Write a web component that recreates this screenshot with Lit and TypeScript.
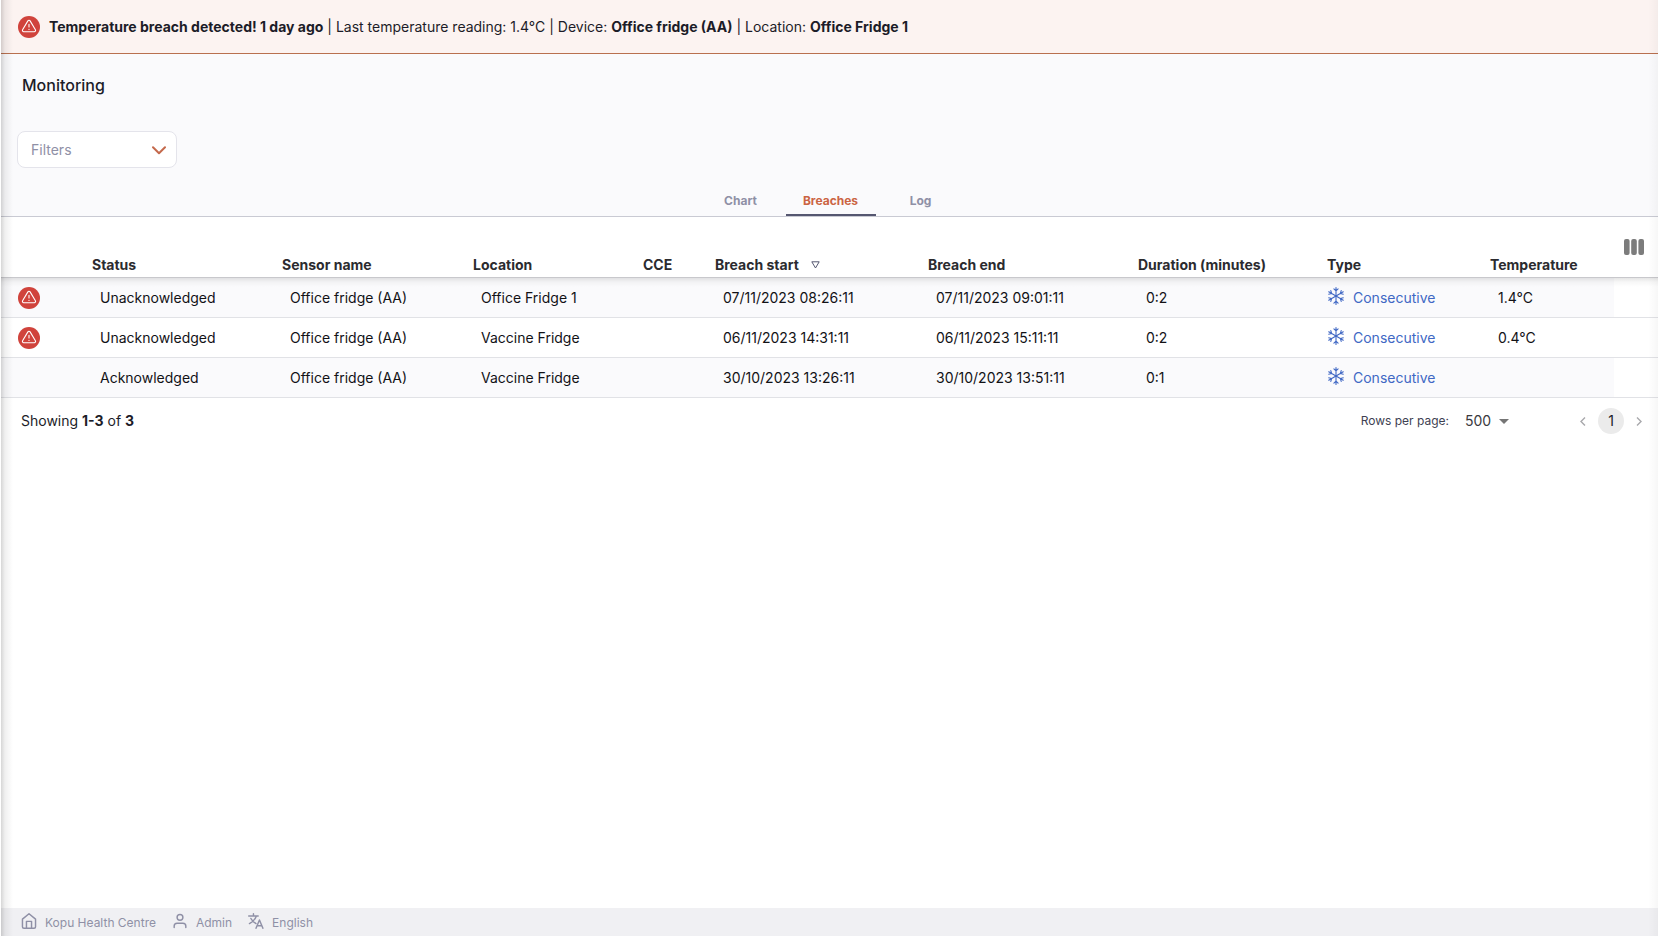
import { LitElement, html, css, svg, nothing } from "lit";
import { customElement, property, state } from "lit/decorators.js";

interface Breach {
  acknowledged: boolean;
  sensor: string;
  location: string;
  cce: string;
  start: string;
  end: string;
  duration: string;
  type: string;
  temperature: string;
}

const BREACHES: Breach[] = [
  { acknowledged: false, sensor: "Office fridge (AA)", location: "Office Fridge 1", cce: "", start: "07/11/2023 08:26:11", end: "07/11/2023 09:01:11", duration: "0:2", type: "Consecutive", temperature: "1.4°C" },
  { acknowledged: false, sensor: "Office fridge (AA)", location: "Vaccine Fridge", cce: "", start: "06/11/2023 14:31:11", end: "06/11/2023 15:11:11", duration: "0:2", type: "Consecutive", temperature: "0.4°C" },
  { acknowledged: true, sensor: "Office fridge (AA)", location: "Vaccine Fridge", cce: "", start: "30/10/2023 13:26:11", end: "30/10/2023 13:51:11", duration: "0:1", type: "Consecutive", temperature: "" },
];

@customElement("alert-icon")
export class AlertIcon extends LitElement {
  static styles = css`
    :host { display: block; width: 22px; height: 22px; flex: none; }
    .icon { display: block; width: 100%; height: 100%; }
  `;
  render() {
    return html`<svg class="icon" viewBox="0 0 22 22" aria-hidden="true">
      <circle cx="11" cy="11" r="11" fill="#d0433c" />
      <g fill="none" stroke="#fff" stroke-width="1.1" stroke-linecap="round" stroke-linejoin="round">
        <path d="M9.900 4.900 4.600 13.800a1.250 1.250 0 0 0 1.100 1.900h10.600a1.250 1.250 0 0 0 1.100-1.900L12.100 4.900a1.280 1.280 0 0 0-2.200 0z" />
        <path d="M11 8.300v2.700M11 13.300v.1" />
      </g>
    </svg>`;
  }
}

@customElement("breach-banner")
export class BreachBanner extends LitElement {
  static styles = css`
    .banner {
      display: flex; align-items: center; gap: 9px;
      height: 53px; padding: 0 17px;
      background: #fcf3f1; border-bottom: 1px solid #b9704f;
      color: #1c1c28; font-size: 14px; line-height: 20px;
    }
    .text { margin: 0; }
    .strong { font-weight: 700; }
  `;
  render() {
    return html`<div class="banner" role="alert">
      <alert-icon></alert-icon>
      <p class="text"><b class="strong">Temperature breach detected! 1 day ago</b> | Last temperature reading: 1.4°C | Device: <b class="strong">Office fridge (AA)</b> | Location: <b class="strong">Office Fridge 1</b></p>
    </div>`;
  }
}

@customElement("breach-table")
export class BreachTable extends LitElement {
  @property({ attribute: false }) rows: Breach[] = [];

  static styles = css`
    .table { width: 100%; table-layout: fixed; border-collapse: separate; border-spacing: 0; font-size: 14px; line-height: 20px; }
    .w-icon { width: 91px; } .w-status { width: 190px; } .w-sensor { width: 191px; }
    .w-location { width: 170px; } .w-cce { width: 72px; } .w-start { width: 213px; }
    .w-end { width: 210px; } .w-duration { width: 189px; } .w-type { width: 163px; }
    .w-temp { width: 124px; } .w-picker { width: 44px; }
    .head { height: 61px; box-sizing: border-box; padding: 0 0 2px; vertical-align: bottom; text-align: left; font-weight: 700; color: #2b2b2f; border-bottom: 1px solid #c8c8cc; white-space: nowrap; }
    .picker-cell { vertical-align: middle; padding: 0 0 0 10px; }
    .sort, .picker { display: inline-flex; align-items: center; gap: 12px; border: 0; padding: 0; margin: 0; background: none; font: inherit; color: inherit; cursor: pointer; }
    .picker { display: flex; }
    .cell { height: 40px; box-sizing: border-box; padding: 0 8px; border-bottom: 1px solid #e1e2e6; color: #121216; white-space: nowrap; }
    .row:nth-child(odd) .cell { background-color: #fafafc; }
    .row .cell.blank { background-color: #fff; }
    .row:first-child .cell, .row:first-child .cell.blank { background-image: linear-gradient(rgba(0, 0, 0, 0.1), rgba(0, 0, 0, 0.03) 4px, transparent 9px); }
    .cell.lead { padding: 0 17px; }
    .cell.kind { padding: 0; }
    .type { display: flex; align-items: center; gap: 8px; color: #4068c4; }
    .flake { display: block; margin-bottom: 4px; }
  `;

  render() {
    return html`<table class="table">
      <colgroup>
        <col class="w-icon" /><col class="w-status" /><col class="w-sensor" /><col class="w-location" /><col class="w-cce" />
        <col class="w-start" /><col class="w-end" /><col class="w-duration" /><col class="w-type" /><col class="w-temp" /><col class="w-picker" />
      </colgroup>
      <thead>
        <tr>
          <th class="head" scope="col" aria-label="Alert"></th>
          <th class="head" scope="col">Status</th>
          <th class="head" scope="col">Sensor name</th>
          <th class="head" scope="col">Location</th>
          <th class="head" scope="col">CCE</th>
          <th class="head" scope="col" aria-sort="descending">
            <button class="sort" type="button">Breach start
              <svg width="9" height="8" viewBox="0 0 9 8" aria-hidden="true"><path d="M.8.8h7.400L4.500 7z" fill="none" stroke="#555770" stroke-width="1" stroke-linejoin="round" /></svg>
            </button>
          </th>
          <th class="head" scope="col">Breach end</th>
          <th class="head" scope="col">Duration (minutes)</th>
          <th class="head" scope="col">Type</th>
          <th class="head" scope="col">Temperature</th>
          <th class="head picker-cell" scope="col">
            <button class="picker" type="button" aria-label="Show / hide columns">
              <svg width="20" height="16" viewBox="0 0 20 16" aria-hidden="true" fill="#7c7c7c"><rect width="5.600" height="16" rx="2" /><rect x="7.200" width="5.600" height="16" rx="2" /><rect x="14.400" width="5.600" height="16" rx="2" /></svg>
            </button>
          </th>
        </tr>
      </thead>
      <tbody>
        ${this.rows.map((r) => html`<tr class="row">
          <td class="cell lead">${r.acknowledged ? nothing : html`<alert-icon></alert-icon>`}</td>
          <td class="cell">${r.acknowledged ? "Acknowledged" : "Unacknowledged"}</td>
          <td class="cell">${r.sensor}</td>
          <td class="cell">${r.location}</td>
          <td class="cell">${r.cce}</td>
          <td class="cell">${r.start}</td>
          <td class="cell">${r.end}</td>
          <td class="cell">${r.duration}</td>
          <td class="cell kind"><span class="type">${this.flake()}${r.type}</span></td>
          <td class="cell">${r.temperature}</td>
          <td class="cell blank"></td>
        </tr>`)}
      </tbody>
    </table>`;
  }

  private flake() {
    return html`<svg class="flake" width="18" height="18" viewBox="0 0 18 18" aria-hidden="true" fill="none" stroke="#4068c4" stroke-width="1.1" stroke-linecap="round" stroke-linejoin="round">
      ${[0, 60, 120, 180, 240, 300].map((a) => svg`<path transform="rotate(${a} 9 9)" d="M9 9V.6M6.900 1.800 9 3.900l2.100-2.100" />`)}
    </svg>`;
  }
}

@customElement("table-pager")
export class TablePager extends LitElement {
  static styles = css`
    .pager { display: flex; align-items: center; justify-content: space-between; height: 46px; padding: 0 13px 0 20px; font-size: 14px; line-height: 20px; color: #1c1c28; }
    .strong { font-weight: 700; }
    .controls, .pages { display: flex; align-items: center; }
    .label { font-size: 12px; color: #3e4152; margin-right: 16px; }
    .size { position: relative; display: flex; align-items: center; margin-right: 67px; }
    .select { appearance: none; border: 0; background: none; padding: 0 16px 0 0; margin: 0; width: 45px; height: 24px; font: inherit; color: #3a3a3e; }
    .caret { position: absolute; right: 1px; pointer-events: none; }
    .pages { gap: 9px; }
    .page, .step { border: 0; padding: 0; margin: 0; font: inherit; background: none; display: flex; align-items: center; justify-content: center; height: 26px; }
    .step { width: 12px; color: #a8a8ac; }
    .page { width: 26px; border-radius: 50%; background: #ebebeb; color: #1c1c28; }
  `;
  render() {
    return html`<div class="pager">
      <div>Showing <b class="strong">1-3</b> of <b class="strong">3</b></div>
      <div class="controls">
        <label class="label" for="size">Rows per page:</label>
        <div class="size">
          <select class="select" id="size"><option>500</option><option>100</option><option>20</option></select>
          <svg class="caret" width="10" height="5" viewBox="0 0 10 5" aria-hidden="true"><path d="M0 0h10L5 5z" fill="#757575" /></svg>
        </div>
        <nav class="pages" aria-label="Pagination">
          <button class="step" type="button" aria-label="Previous page"><svg width="6" height="9" viewBox="0 0 6 9" fill="none" stroke="currentColor" stroke-width="1.4"><path d="M5 .5 1 4.500l4 4" /></svg></button>
          <button class="page" type="button" aria-current="page">1</button>
          <button class="step" type="button" aria-label="Next page"><svg width="6" height="9" viewBox="0 0 6 9" fill="none" stroke="currentColor" stroke-width="1.4"><path d="m1 .5 4 4-4 4" /></svg></button>
        </nav>
      </div>
    </div>`;
  }
}

@customElement("status-footer")
export class StatusFooter extends LitElement {
  static styles = css`
    .footer { display: flex; align-items: center; gap: 16px; box-sizing: border-box; height: 28px; padding: 2px 20px 0; background: #f0f0f3; color: #8f90a6; font-size: 12px; line-height: 16px; }
    .item { display: flex; align-items: center; gap: 8px; }
    .icon { display: block; margin-bottom: 4px; fill: none; stroke: currentColor; stroke-width: 2; stroke-linecap: round; stroke-linejoin: round; }
  `;
  render() {
    return html`<footer class="footer">
      <div class="item">
        <svg class="icon" width="16" height="16" viewBox="1 1 22 22" aria-hidden="true"><path d="M3 9.500 12 2l9 7.500V20a2 2 0 0 1-2 2H5a2 2 0 0 1-2-2zM8.500 22V12.500h7V22" /></svg>
        <span>Kopu Health Centre</span>
      </div>
      <div class="item">
        <svg class="icon" width="16" height="16" viewBox="1 1 22 22" aria-hidden="true"><path d="M20 21v-2a4 4 0 0 0-4-4H8a4 4 0 0 0-4 4v2" /><circle cx="12" cy="7" r="4" /></svg>
        <span>Admin</span>
      </div>
      <div class="item">
        <svg class="icon" width="16" height="16" viewBox="1 1 22 22" aria-hidden="true"><path d="M2 5h13M8.500 2v3M12.500 5C11 9.500 7.500 13 3 15.500M5 8.500c1.500 3 4 5.500 7 7M12 22l4.750-11.500L21.500 22M13.600 18.500h6.300" /></svg>
        <span>English</span>
      </div>
    </footer>`;
  }
}

@customElement("app-root")
export class AppRoot extends LitElement {
  @state() private tab = "Breaches";

  static styles = css`
    :host { display: block; font-family: Inter, "Liberation Sans", sans-serif; }
    .page { position: relative; display: flex; flex-direction: column; min-height: 100vh; box-sizing: border-box; padding-left: 1px; background: #fff; }
    .page::before, .page::after { content: ""; position: absolute; z-index: 1; top: 0; bottom: 0; pointer-events: none; }
    .page::before { left: 1px; width: 12px; background: linear-gradient(to right, rgba(0, 0, 0, 0.16), rgba(0, 0, 0, 0.06) 4px, transparent); }
    .page::after { right: 0; width: 10px; background: linear-gradient(to left, rgba(0, 0, 0, 0.03), transparent); }
    .header { background: #fafafc; border-bottom: 1px solid #c9cad3; }
    .title { margin: 0; padding: 19px 21px 0; font-size: 16px; line-height: 24px; font-weight: 500; color: #1c1c28; }
    .filters { position: relative; width: 160px; margin: 34px 0 0 16px; }
    .filter-select { appearance: none; display: block; width: 100%; height: 37px; margin: 0; padding: 0 36px 0 13px; border: 1px solid #e4e4eb; border-radius: 8px; background: #fff; color: #8f90a6; font: inherit; font-size: 14px; }
    .chevron { position: absolute; right: 11px; top: 15px; pointer-events: none; }
    .tabs { display: flex; justify-content: center; margin-top: 16px; padding-left: 2px; }
    .tab { width: 90px; height: 32px; margin: 0; padding: 3px 0 0; border: 0; border-bottom: 2px solid transparent; background: none; color: #8f90a6; font: inherit; font-size: 12px; font-weight: 700; }
    .tab.active { color: #cb6443; border-bottom-color: #555770; }
    .main { flex: 1; }
  `;

  render() {
    return html`<div class="page">
      <breach-banner></breach-banner>
      <header class="header">
        <h1 class="title">Monitoring</h1>
        <div class="filters">
          <select class="filter-select" aria-label="Filters"><option>Filters</option></select>
          <svg class="chevron" width="14" height="9" viewBox="0 0 14 9" aria-hidden="true"><path d="m1 1.200 6 6 6-6" fill="none" stroke="#c4694c" stroke-width="2" stroke-linecap="round" stroke-linejoin="round" /></svg>
        </div>
        <div class="tabs" role="tablist">
          ${["Chart", "Breaches", "Log"].map((t) => html`<button type="button" role="tab" class="tab ${t === this.tab ? "active" : ""}" aria-selected=${t === this.tab} @click=${() => (this.tab = t)}>${t}</button>`)}
        </div>
      </header>
      <main class="main">
        <breach-table .rows=${BREACHES}></breach-table>
        <table-pager></table-pager>
      </main>
      <status-footer></status-footer>
    </div>`;
  }
}
